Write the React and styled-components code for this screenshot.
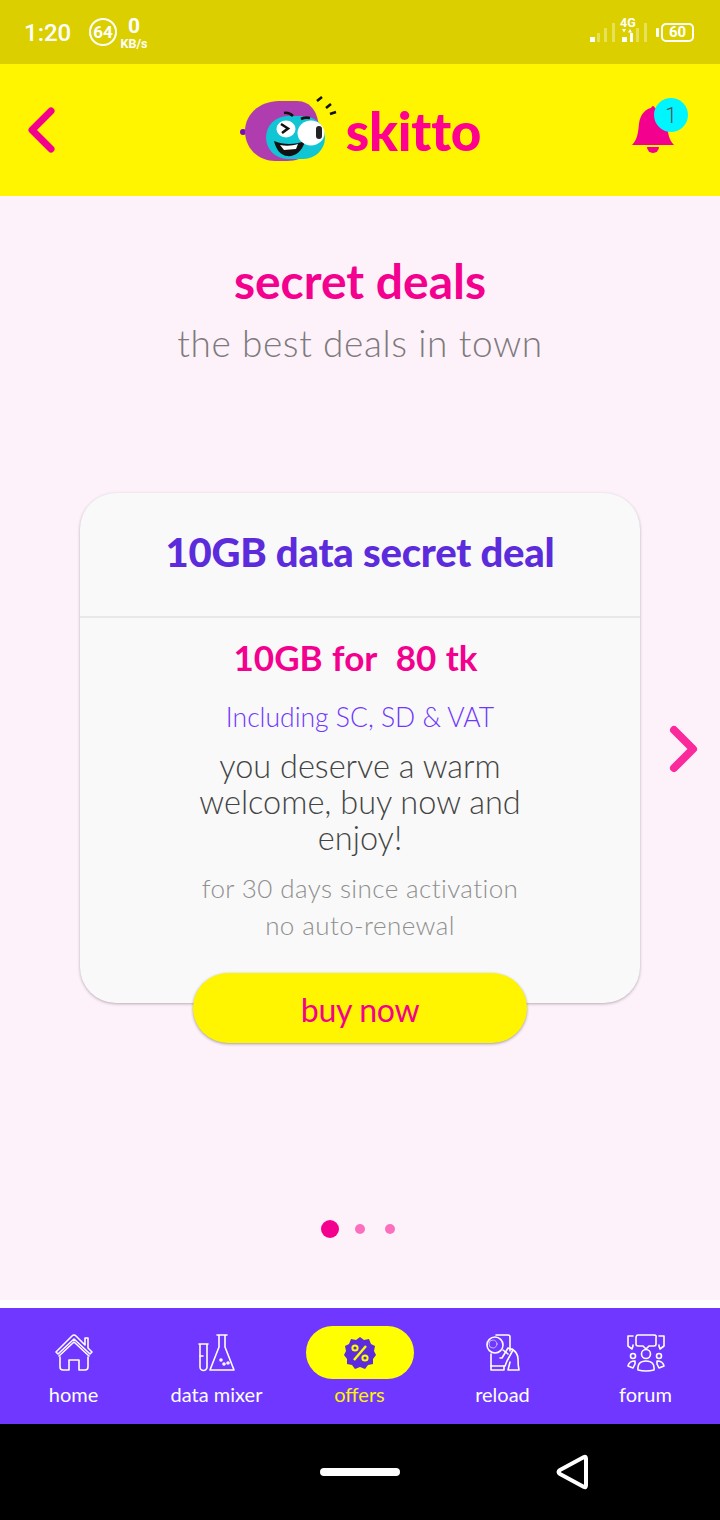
import React from "react";
import styled, { createGlobalStyle } from "styled-components";

const Global = createGlobalStyle`
  html, body { margin: 0; padding: 0; background: #000; }
  * { box-sizing: border-box; }
`;
const FONT = `Lato, "Noto Sans", sans-serif`;
const Page = styled.div`width:720px;height:1520px;display:flex;flex-direction:column;font-family:${FONT};overflow:hidden;`;
const StatusBar = styled.div`height:64px;background:#dbcf00;display:flex;align-items:center;padding:0 24px;color:#fff;font-family:Roboto,sans-serif;flex:none;`;
const Time = styled.div`font-size:24px;font-weight:500;width:65px;margin-top:1px;`;
const Ring = styled.div`width:28px;height:28px;border:2.5px solid #fff;border-radius:50%;display:flex;align-items:center;justify-content:center;font-size:17px;font-weight:700;margin-right:3px;`;
const Speed = styled.div`display:flex;flex-direction:column;align-items:center;font-weight:700;width:28px;`;
const SpeedNum = styled.span`font-size:21px;line-height:22px;`;
const SpeedUnit = styled.span`font-size:12.5px;line-height:13px;`;
const StatusRight = styled.div`margin-left:auto;display:flex;align-items:center;margin-right:2px;`;
const Battery = styled.div`width:33px;height:19px;border:2px solid #fff;border-radius:5px;font-size:15px;font-weight:700;display:flex;align-items:center;justify-content:center;`;
const BatteryCap = styled.div`width:3px;height:9px;background:#fff;border-radius:1px;margin:0 2px 0 0;`;
const Header = styled.header`height:132px;background:#fff500;flex:none;display:grid;grid-template-columns:1fr auto 1fr;align-items:center;padding:0 26px;`;
const BellWrap = styled.div`justify-self:end;position:relative;width:42px;height:50px;margin-right:20px;margin-top:-2px;`;
const Badge = styled.div`position:absolute;right:-14px;top:-6px;width:34px;height:34px;border-radius:50%;background:#00f6ff;color:#555;font-size:22px;display:flex;align-items:center;justify-content:center;font-family:Roboto,sans-serif;font-weight:300;`;
const LogoRow = styled.div`display:flex;align-items:center;`;
const LogoText = styled.span`font-family:Lato,sans-serif;font-weight:900;font-size:53px;line-height:50px;color:#ff0090;letter-spacing:-0.2px;margin-left:7px;margin-top:2px;`;
const Body = styled.main`height:1104px;background:#fdf2f9;flex:none;display:flex;flex-direction:column;align-items:center;`;
const Title = styled.h1`margin:57px 0 0;font-size:48px;line-height:56px;font-weight:700;color:#f4008e;`;
const Subtitle = styled.p`margin:8px 0 0;font-size:37px;line-height:52px;font-weight:300;color:#7e7a7d;letter-spacing:.6px;`;
const Carousel = styled.div`margin-top:124px;width:720px;display:grid;grid-template-columns:80px 560px 80px;align-items:start;`;
const CardCol = styled.div`grid-column:2;display:flex;flex-direction:column;align-items:center;`;
const Card = styled.section`width:560px;height:510px;background:#f9f9f9;border-radius:36px;box-shadow:0 1px 3px rgba(90,60,80,.4);display:flex;flex-direction:column;align-items:center;`;
const CardHead = styled.div`width:100%;height:125px;border-bottom:2px solid #e8e8e8;display:flex;align-items:center;justify-content:center;padding-bottom:6px;`;
const CardTitle = styled.h2`margin:0;font-size:40px;font-weight:900;color:#5c2cdc;letter-spacing:-.2px;`;
const Price = styled.div`margin-top:15px;padding-right:9px;font-size:35px;line-height:48px;font-weight:700;color:#f4008e;word-spacing:1px;`;
const Tax = styled.div`margin-top:18px;font-size:26.5px;line-height:36px;font-weight:300;color:#6f37ff;`;
const Desc = styled.div`margin-top:13px;width:360px;text-align:center;font-size:32.5px;line-height:36px;font-weight:300;color:#444;`;
const Small = styled.div`margin-top:14px;text-align:center;font-size:26px;line-height:37px;font-weight:300;color:#8f8f8f;letter-spacing:.4px;`;
const BuyButton = styled.button`margin-top:-30px;width:334px;height:70px;border:none;border-radius:35px;background:#fff500;color:#f4008e;font-family:${FONT};font-size:32px;font-weight:400;letter-spacing:-.3px;box-shadow:0 1px 3px rgba(60,40,60,.45);padding:2px 0 0;`;
const ArrowCol = styled.div`margin-top:232px;padding-left:29px;`;
const Dots = styled.div`margin-top:171px;display:grid;grid-template-columns:repeat(3,30px);height:30px;align-items:center;justify-items:center;`;
const Dot = styled.span`display:block;width:${p=>p.$on?18:10}px;height:${p=>p.$on?18:10}px;border-radius:50%;background:${p=>p.$on?"#f4008e":"#fb6fbf"};`;
const WhiteGap = styled.div`height:8px;background:#fff;flex:none;`;
const Nav = styled.nav`height:116px;background:#6f37ff;flex:none;display:grid;grid-template-columns:repeat(5,143px);padding-left:2px;`;
const NavItem = styled.div`display:flex;flex-direction:column;align-items:center;color:${p=>p.$on?"#fff500":"#fff"};font-size:20px;font-weight:400;`;
const IconPill = styled.div`margin-top:18px;width:108px;height:53px;border-radius:27px;background:${p=>p.$on?"#ff0":"transparent"};display:flex;align-items:center;justify-content:center;`;
const NavLabel = styled.span`margin-top:1px;line-height:28px;`;
const SysBar = styled.div`height:96px;background:#000;flex:none;display:flex;align-items:center;`;
const HomePill = styled.div`width:80px;height:8px;border-radius:4px;background:#fff;margin-left:320px;`;
const BackWrap = styled.div`margin-left:156px;display:flex;`;

const Chevron = ({flip,sw=7}) => (
  <svg width="30" height="48" viewBox="0 0 30 48" fill="none" style={{display:"block"}}>
    <path d={flip?"M5 5 L24 24 L5 43":"M25 5 L6 24 L25 43"} stroke={flip?"#fb2a9c":"#f4008e"} strokeWidth={sw} strokeLinecap="round" strokeLinejoin="round"/>
  </svg>
);
/* origin of the drawing: x=240, y=96 on the page */
const Logo = () => (
  <svg width="100" height="70" viewBox="0 0 100 70">
    <circle cx="4" cy="37" r="3" fill="#7a10b8"/>
    <path d="M4 36 L9 36 L12 30 L12 44 L9 38 L4 38Z" fill="#7a10b8"/>
    <path d="M6 36 C6 18 22 6 40 6 H58 C72 6 80 18 80 36 C80 54 66 66 48 66 H36 C20 66 6 54 6 36Z" fill="#b03db0"/>
    <rect x="27" y="21" width="59" height="43" rx="21.5" fill="#10c5d4"/>
    <path d="M35 46 C44 50 56 50 66 46 C63 58 54 62 48 61 C41 60 37 54 35 46Z" fill="#111"/>
    <path d="M41 50 C47 51 53 51 59 49 L57 54 L45 55Z" fill="#fff"/>
    <ellipse cx="47" cy="34" rx="9.5" ry="8.5" fill="#fff"/>
    <path d="M42 29 L49 33.5 L43 38" stroke="#111" strokeWidth="2.6" fill="none"/>
    <ellipse cx="72" cy="38" rx="13.5" ry="12.5" fill="#fff"/>
    <rect x="77" y="31" width="6" height="13" rx="3" fill="#222"/>
    <path d="M45 18 Q50 17 54 21" stroke="#111" strokeWidth="2.6" fill="none"/>
    <path d="M62 24 Q66 22 71 23" stroke="#111" strokeWidth="2.6" fill="none"/>
    <path d="M78 6 L83 2 M87 13 L92 9 M91 19 L97 17" stroke="#111" strokeWidth="2.6"/>
  </svg>
);
const Bell = () => (
  <svg width="42" height="50" viewBox="0 0 42 50" style={{display:"block"}}>
    <path d="M0 41 C5 36 6 30 7 20 C8 10 14 5 19 4 Q21 0 23 4 C29 5 34 10 35 20 C36 30 37 36 42 41Z" fill="#f4008e"/>
    <path d="M15 43 H27 A6 6 0 0 1 15 43Z" fill="#f4008e"/>
  </svg>
);
const s = {fill:"none",stroke:"currentColor",strokeWidth:1.6,strokeLinejoin:"round",strokeLinecap:"round"};
const Home = () => <svg width="38" height="38" viewBox="0 0 38 38" {...s}>
  <path d="M1 18 L17 2 Q19 0 21 2 L30 11 V4 H33 V14 L37 18 L35 20 L19 5 L3 20Z"/>
  <path d="M4 22 L19 8 L34 22"/><path d="M5 23 V33 Q5 36 8 36 H14 V26 H24 V36 H30 Q33 36 33 33 V23"/>
</svg>;
const Flask = () => <svg width="38" height="38" viewBox="0 0 38 38" {...s}>
  <path d="M1 10 H10 M2 10 V33 A3.5 3.5 0 0 0 9 33 V10"/><path d="M2 22 H5"/>
  <path d="M19 1 H29 M21 1 V13 L12 36 H36 L27 13 V1"/><circle cx="23" cy="26" r="1" /><circle cx="26" cy="30" r="1"/><circle cx="30" cy="29" r="1"/>
</svg>;
const Offer = () => <svg width="34" height="34" viewBox="0 0 34 34">
  <path d="M17 1 L21 4 L26 3 L28 8 L32 10 L31 15 L33 19 L30 23 L30 28 L25 29 L22 33 L17 31 L12 33 L9 29 L4 28 L4 23 L1 19 L3 15 L2 10 L6 8 L8 3 L13 4Z" fill="#5c2cdc"/>
  <path d="M11 24 L23 10" stroke="#ff0" strokeWidth="2.4"/><circle cx="12" cy="12" r="2.6" fill="none" stroke="#ff0" strokeWidth="2"/><circle cx="22" cy="22" r="2.6" fill="none" stroke="#ff0" strokeWidth="2"/>
</svg>;
const Reload = () => <svg width="34" height="38" viewBox="0 0 34 38" {...s}>
  <circle cx="9" cy="11" r="8"/><circle cx="7" cy="10" r="4" strokeWidth="1" opacity=".6"/>
  <path d="M10 1 H22 Q24 1 24 3 V17"/><path d="M5 20 V32 H19 L21 27 L27 16 L22 14 L16 24 H14"/><path d="M5 32 V36 H18 V32"/>
  <path d="M26 15 Q32 19 32 25 Q32 32 33 36 H22 L24 28"/><path d="M17 16 L22 20"/>
</svg>;
const Forum = () => <svg width="38" height="38" viewBox="0 0 38 38" {...s}>
  <path d="M11 1 H27 Q30 1 29 4 V10 Q29 12 27 12 H22 L19 15 L16 12 H11 Q9 12 9 10 V4 Q9 1 11 1Z"/>
  <path d="M6 2 H1 V12 L5 15 L6 12 V11"/><path d="M32 2 H37 V12 L33 15 L32 12 V11"/>
  <circle cx="19" cy="20" r="4.5"/><circle cx="6" cy="22" r="2.5"/><circle cx="32" cy="22" r="2.5"/>
  <path d="M11 36 Q10 27 19 27 Q28 27 27 36 Q19 38 11 36Z"/><path d="M1 32 Q2 27 8 27 L8 30 L6 34Z"/><path d="M37 32 Q36 27 30 27 L30 30 L32 34Z"/>
</svg>;
const Signal = () => <svg width="60" height="42" viewBox="0 0 60 42" style={{marginRight:6}} fill="#fff">
  {[[0,26,5,5,1],[7,22,3,9,.35],[14,17,3,14,.35],[22,12,3,19,.35],[32,26,5,5,1],[40,22,3,9,1],[46,17,3,14,.35],[54,12,3,19,.35]].map((r,i)=><rect key={i} x={r[0]} y={r[1]} width={r[2]} height={r[3]} opacity={r[4]}/>)}
  <text x="30" y="16" fontFamily="Roboto" fontWeight="700" fontSize="12.5">4G</text>
  <path d="M32 18h4l-2 3.5zM38 21.5h4l-2-3.5z"/>
</svg>;

const items = [["home",<Home/>],["data mixer",<Flask/>],["offers",<Offer/>,true],["reload",<Reload/>],["forum",<Forum/>]];

export default function App(){
  return <Page><Global/>
    <StatusBar>
      <Time>1:20</Time><Ring>64</Ring>
      <Speed><SpeedNum>0</SpeedNum><SpeedUnit>KB/s</SpeedUnit></Speed>
      <StatusRight><Signal/><BatteryCap/><Battery>60</Battery></StatusRight>
    </StatusBar>
    <Header>
      <Chevron/>
      <LogoRow><Logo/><LogoText>skitto</LogoText></LogoRow>
      <BellWrap><Bell/><Badge>1</Badge></BellWrap>
    </Header>
    <Body>
      <Title>secret deals</Title>
      <Subtitle>the best deals in town</Subtitle>
      <Carousel>
        <CardCol>
          <Card>
            <CardHead><CardTitle>10GB data secret deal</CardTitle></CardHead>
            <Price>10GB for{"\u00a0\u00a0"}80 tk</Price>
            <Tax>Including SC, SD &amp; VAT</Tax>
            <Desc>you deserve a warm welcome, buy now and enjoy!</Desc>
            <Small>for 30 days since activation<br/>no auto-renewal</Small>
          </Card>
          <BuyButton>buy now</BuyButton>
        </CardCol>
        <ArrowCol><Chevron flip sw={8}/></ArrowCol>
      </Carousel>
      <Dots><Dot $on/><Dot/><Dot/></Dots>
    </Body>
    <WhiteGap/>
    <Nav>{items.map(([l,ic,on])=><NavItem key={l} $on={on}><IconPill $on={on}>{ic}</IconPill><NavLabel>{l}</NavLabel></NavItem>)}</Nav>
    <SysBar><HomePill/><BackWrap>
      <svg width="32" height="36" viewBox="0 0 32 36" fill="none"><path d="M28 3 Q30 2 30 5 V31 Q30 34 28 33 L4 20 Q1 18 4 16Z" stroke="#fff" strokeWidth="4" strokeLinejoin="round"/></svg>
    </BackWrap></SysBar>
  </Page>;
}
